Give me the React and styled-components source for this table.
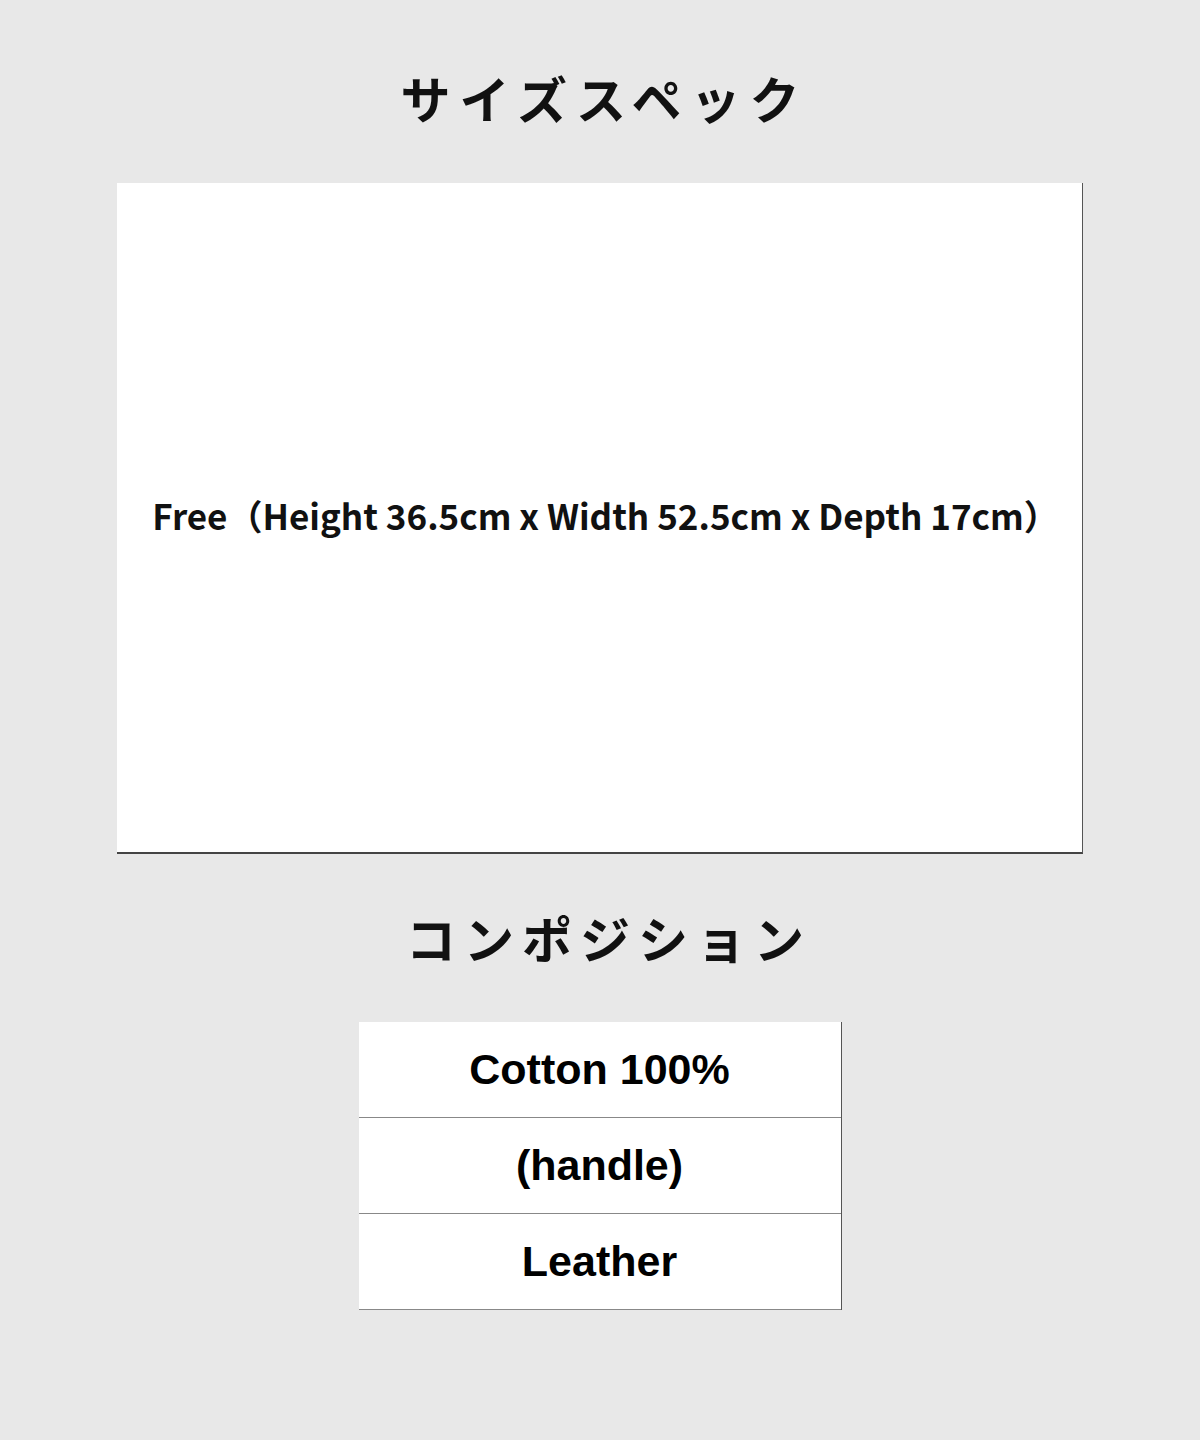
import React from 'react'
import styled, { createGlobalStyle } from 'styled-components'

const GlobalStyle = createGlobalStyle`
  html, body {
    margin: 0;
    padding: 0;
    background: #e8e8e8;
  }
`

const Page = () => {
  return (
    <Stcontainer>
      <GlobalStyle />
      <StTitle>サイズスペック</StTitle>
      <StSizeBox>
        <StSizeText>Free（Height 36.5cm x Width 52.5cm x Depth 17cm）</StSizeText>
      </StSizeBox>
      <StTitle second>コンポジション</StTitle>
      <StTable>
        <StRow>Cotton 100%</StRow>
        <StRow>(handle)</StRow>
        <StRow>Leather</StRow>
      </StTable>
    </Stcontainer>
  )
}

export default Page

const Stcontainer = styled.div`
  width: 1200px;
  height: 1440px;
  background-color: #e8e8e8;
  display: flex;
  flex-direction: column;
  align-items: center;
  padding-top: 64px;
  box-sizing: border-box;
  font-family: "Noto Sans CJK JP", "Noto Sans", sans-serif;
  color: #111;
`

const StTitle = styled.h2`
  margin: 0;
  margin-top: ${(p) => (p.second ? '50px' : '0')};
  font-size: 50px;
  line-height: 66px;
  font-weight: 700;
  letter-spacing: ${(p) => (p.second ? '8px' : '9px')};
  padding-left: ${(p) => (p.second ? '18px' : '9px')};
`

const StSizeBox = styled.div`
  margin-top: 53px;
  width: 966px;
  height: 671px;
  box-sizing: border-box;
  background-color: #fff;
  border-right: 1px solid #555;
  border-bottom: 2px solid #444;
  display: flex;
  justify-content: center;
  align-items: center;
`

const StSizeText = styled.p`
  margin: -6px 0 0 12px;
  font-size: 35px;
  font-weight: 700;
`

const StTable = styled.div`
  margin-top: 52px;
  width: 482px;
  background-color: #fff;
  border-right: 1px solid #555;
  display: flex;
  flex-direction: column;
`

const StRow = styled.div`
  height: 96px;
  box-sizing: border-box;
  border-bottom: 1px solid #888;
  display: flex;
  justify-content: center;
  align-items: center;
  font-family: "Liberation Sans", Arial, sans-serif;
  font-size: 43px;
  font-weight: 700;
  color: #000;
`
